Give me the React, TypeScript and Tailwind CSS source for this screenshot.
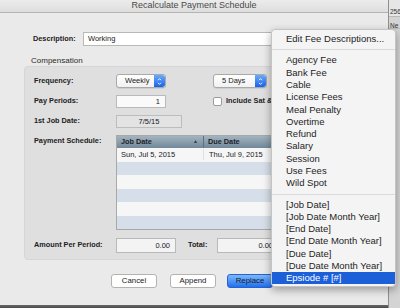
import React from "react";

const feeItems = [
  "Agency Fee",
  "Bank Fee",
  "Cable",
  "License Fees",
  "Meal Penalty",
  "Overtime",
  "Refund",
  "Salary",
  "Session",
  "Use Fees",
  "Wild Spot",
];

const tokenItems = [
  "[Job Date]",
  "[Job Date Month Year]",
  "[End Date]",
  "[End Date Month Year]",
  "[Due Date]",
  "[Due Date Month Year]",
];

function Stepper() {
  return (
    <div className="flex h-full w-[11px] items-center justify-center rounded-r-[3px] bg-gradient-to-b from-[#6aa9fb] to-[#1763e8]">
      <svg width="5" height="9" viewBox="0 0 5 9" fill="none">
        <path d="M1 3.2 L2.5 1.6 L4 3.2" stroke="white" strokeWidth="0.9" />
        <path d="M1 5.8 L2.5 7.4 L4 5.8" stroke="white" strokeWidth="0.9" />
      </svg>
    </div>
  );
}

function Select({ value, width }: { value: string; width: string }) {
  return (
    <div
      className={`flex h-[14px] ${width} items-center rounded-[3px] border border-[#a9a9a9] bg-gradient-to-b from-white to-[#f1f1f1] shadow-[0_0.5px_0.5px_rgba(0,0,0,0.15)]`}
    >
      <span className="flex-1 pl-[8px] text-[7.5px] text-[#222]">{value}</span>
      <Stepper />
    </div>
  );
}

function Label({ children }: { children: React.ReactNode }) {
  return (
    <div className="w-[82px] shrink-0 text-[7.3px] font-bold text-[#222]">
      {children}
    </div>
  );
}

function Button({
  children,
  primary,
}: {
  children: React.ReactNode;
  primary?: boolean;
}) {
  return (
    <div
      className={`flex h-[14px] w-[46px] items-center justify-center rounded-[3px] border text-[7.8px] text-[#1a1a1a] ${
        primary
          ? "border-[#2a62c9] bg-gradient-to-b from-[#7ab8fb] to-[#1d6ff1]"
          : "border-[#b3b3b3] bg-white"
      }`}
    >
      {children}
    </div>
  );
}

export default function App() {
  return (
    <div
      className="relative flex h-[308px] w-[400px] overflow-hidden bg-[#c9c9c9]"
      style={{ fontFamily: '"Liberation Sans", Arial, sans-serif' }}
    >
      {/* dialog window */}
      <div className="flex w-[389px] shrink-0 flex-col border-r border-[#8f8f8f]">
        <div className="flex h-[13px] items-center justify-center border-b border-[#b4b4b4] bg-gradient-to-b from-[#ececec] to-[#dedede] text-[9px] text-[#4a4a4a]">
          Recalculate Payment Schedule
        </div>

        <div className="flex flex-1 flex-col bg-[#eaeaea]">
          {/* description */}
          <div className="mt-[19px] flex items-center pl-[33px]">
            <div className="w-[50px] text-[7.3px] font-bold text-[#222]">
              Description:
            </div>
            <div className="flex h-[14px] w-[260px] items-center border border-[#b9b9b9] bg-white pl-[4px] text-[7.5px] text-[#222]">
              Working
            </div>
          </div>

          <div className="mt-[10px] h-[10px] pl-[31px] text-[8px] leading-[10px] text-[#2a2a2a]">
            Compensation
          </div>

          {/* compensation box */}
          <div className="ml-[24px] flex h-[194px] w-[350px] flex-col rounded-[4px] border border-[#d6d6d6] bg-[#dfdfdf] pl-[9px] pt-[7px]">
            <div className="flex items-center">
              <Label>Frequency:</Label>
              <Select value="Weekly" width="w-[50px]" />
              <div className="ml-[47px]">
                <Select value="5 Days" width="w-[54px]" />
              </div>
            </div>

            <div className="mt-[7px] flex items-center">
              <Label>Pay Periods:</Label>
              <div className="flex h-[13px] w-[50px] items-center justify-end border border-[#b9b9b9] bg-[#fafafa] pr-[5px] text-[7.5px] text-[#222]">
                1
              </div>
              <div className="ml-[47px] flex items-center">
                <div className="h-[9px] w-[9px] rounded-[2px] border border-[#9c9c9c] bg-white" />
                <span className="ml-[4px] text-[7.3px] font-bold text-[#222]">
                  Include Sat &amp; Sun
                </span>
              </div>
            </div>

            <div className="mt-[7px] flex items-center">
              <Label>1st Job Date:</Label>
              <div className="flex h-[13px] w-[66px] items-center justify-center border border-[#bdbdbd] bg-[#e3e3e3] text-[7.5px] text-[#222]">
                7/5/15
              </div>
            </div>

            <div className="mt-[7px] flex items-start">
              <div className="pt-[1px]">
                <Label>Payment Schedule:</Label>
              </div>
              <div className="w-[200px] border border-[#a8a8a8] bg-white">
                <div className="flex h-[12px] bg-gradient-to-b from-[#a3b4bf] to-[#71889a] text-[7.3px] font-bold text-[#1c2329]">
                  <div className="flex w-[87px] items-center justify-between border-r border-[#5e7180] pl-[4px] pr-[5px]">
                    <span>Job Date</span>
                    <span className="text-[5px] text-[#2f3d47]">▲</span>
                  </div>
                  <div className="flex items-center pl-[4px]">Due Date</div>
                </div>
                {[0, 1, 2, 3, 4, 5].map((i) => (
                  <div
                    key={i}
                    className={`flex h-[13.5px] items-center text-[7.5px] text-[#222] ${
                      i % 2 === 0 ? "bg-[#f6f6f6]" : "bg-[#d6dfe9]"
                    }`}
                  >
                    <div className="w-[87px] border-r border-[#e0e0e0] pl-[4px]">
                      {i === 0 ? "Sun, Jul 5, 2015" : ""}
                    </div>
                    <div className="pl-[5px]">
                      {i === 0 ? "Thu, Jul 9, 2015" : ""}
                    </div>
                  </div>
                ))}
              </div>
            </div>

            <div className="mt-[8px] flex items-center">
              <Label>Amount Per Period:</Label>
              <div className="flex h-[15px] w-[60px] items-center justify-end border border-[#b9b9b9] bg-[#f3f3f3] pr-[5px] text-[7.5px] text-[#222]">
                0.00
              </div>
              <span className="ml-[12px] w-[29px] text-[7.3px] font-bold text-[#222]">
                Total:
              </span>
              <div className="flex h-[15px] w-[66px] items-center justify-end border border-[#b9b9b9] bg-[#f3f3f3] pr-[9px] text-[7.5px] text-[#222]">
                0.00
              </div>
            </div>
          </div>

          {/* buttons */}
          <div className="mt-[14px] flex gap-[13px] pl-[111px]">
            <Button>Cancel</Button>
            <Button>Append</Button>
            <div className="-ml-[2px]">
              <Button primary>Replace</Button>
            </div>
          </div>
        </div>
        <div className="h-[3px] bg-gradient-to-b from-[#6a6a6a] to-[#4a4a4a]" />
      </div>

      {/* window behind, on the right */}
      <div className="flex flex-1 flex-col bg-[#d4d4d4] text-[6.5px] text-[#333]">
        <div className="h-[17px] border-b border-[#b8b8b8] bg-[#e6e6e6] pt-[8px] pl-[1px] leading-[7px]">
          256
        </div>
        <div className="h-[12px] border-b border-[#bdbdbd] pt-[6px] pl-[1px] leading-[6px]">
          Ne
        </div>
      </div>

      {/* popup menu */}
      <div className="absolute left-[271px] top-[29px] flex w-[125px] flex-col rounded-[4px] border border-[#c4c4c4] bg-[#f4f4f4] pt-[3px] pb-[2px] text-[9.5px] text-[#1e1e1e] shadow-[0_3px_8px_rgba(0,0,0,0.35)]">
        <div className="flex h-[12.3px] items-center pl-[14px]">
          Edit Fee Descriptions...
        </div>
        <div className="my-[4px] h-px bg-[#dadada]" />
        {feeItems.map((item) => (
          <div key={item} className="flex h-[12.3px] items-center pl-[14px]">
            {item}
          </div>
        ))}
        <div className="my-[4px] h-px bg-[#dadada]" />
        {tokenItems.map((item) => (
          <div key={item} className="flex h-[12.3px] items-center pl-[14px]">
            {item}
          </div>
        ))}
        <div className="flex h-[12px] items-center bg-[#1b5fd9] pl-[14px] text-white">
          Epsiode # [#]
        </div>
      </div>
    </div>
  );
}
